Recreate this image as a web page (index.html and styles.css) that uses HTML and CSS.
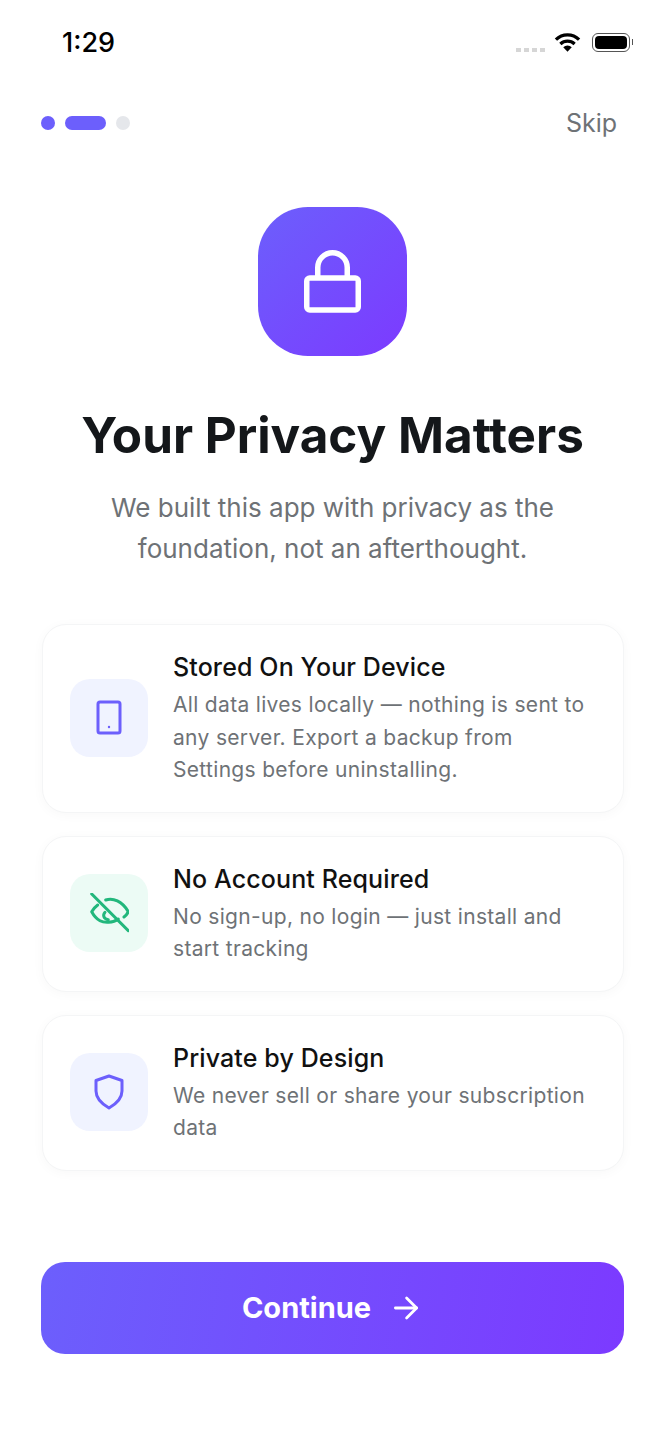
FILE: index.html
```html
<!DOCTYPE html>
<html lang="en">
<head>
    <meta charset="UTF-8">
    <meta name="viewport" content="width=device-width, initial-scale=1.0">
    <title>Your Privacy Matters</title>
    <link rel="stylesheet" href="styles.css">
</head>
<body>

<div class="status-bar">
    <span class="time">1:29</span>
    <div class="status-icons">
        <div class="signal"><i></i><i></i><i></i><i></i></div>
        <svg class="wifi" width="27" height="20" viewBox="0 0 28 20">
            <path d="M2 7.500 A17 17 0 0 1 26 7.500" fill="none" stroke="#000" stroke-width="3.400"/>
            <path d="M6.600 12 A11 11 0 0 1 21.400 12" fill="none" stroke="#000" stroke-width="3.400"/>
            <path d="M14 20 L9.600 15.400 A6.400 6.400 0 0 1 18.400 15.400 Z" fill="#000"/>
        </svg>
        <div class="battery"><div class="battery-fill"></div></div>
        <div class="battery-cap"></div>
    </div>
</div>

<div class="top-row">
    <div class="dots">
        <span class="dot"></span>
        <span class="dot wide"></span>
        <span class="dot off"></span>
    </div>
    <span class="skip">Skip</span>
</div>

<div class="hero">
    <div class="hero-icon">
        <svg width="57" height="63" viewBox="0 0 57 63" fill="none" stroke="#fff" stroke-width="5.500" stroke-linejoin="round">
            <rect x="2.750" y="28" width="51.500" height="32" rx="3"/>
            <path d="M13.750 28 V17.500 A14.750 14.750 0 0 1 43.250 17.500 V28"/>
        </svg>
    </div>
    <h1>Your Privacy Matters</h1>
    <p class="subtitle">We built this app with privacy as the<br>foundation, not an afterthought.</p>
</div>

<div class="cards">
    <div class="card">
        <div class="card-icon blue">
            <svg width="28" height="36" viewBox="0 0 28 36" fill="none" stroke="#6c5ffc" stroke-width="3">
                <rect x="3" y="2" width="22" height="31" rx="2"/>
                <circle cx="14" cy="27" r="1.200" fill="#6c5ffc" stroke="none"/>
            </svg>
        </div>
        <div class="card-text">
            <h2>Stored On Your Device</h2>
            <p>All data lives locally — nothing is sent to any server. Export a backup from Settings before uninstalling.</p>
        </div>
    </div>
    <div class="card">
        <div class="card-icon green">
            <svg width="40" height="40" viewBox="0 0 40 40" fill="none" stroke="#22b77c" stroke-width="3" stroke-linecap="round" stroke-linejoin="round">
                <path d="M2.700 1 L39.300 37.700"/>
                <path d="M8.700 12 C6 14 4 16.500 2.700 18.700 C5 23 8 26 11 27.700 C15 30 24 30 29.300 26"/>
                <path d="M16.700 7 C24 4.500 33 8 39.300 18.700 C38.500 20.500 37 22.500 35 24"/>
                <path d="M16 19.300 C13.500 22 14.500 26 19.300 26.700"/>
            </svg>
        </div>
        <div class="card-text">
            <h2>No Account Required</h2>
            <p>No sign-up, no login — just install and start tracking</p>
        </div>
    </div>
    <div class="card">
        <div class="card-icon blue">
            <svg width="30" height="36" viewBox="0 0 30 36" fill="none" stroke="#6c5ffc" stroke-width="3" stroke-linejoin="round">
                <path d="M15 2 L28 6.500 V17 C28 25 22 30 15 34 C8 30 2 25 2 17 V6.500 Z"/>
            </svg>
        </div>
        <div class="card-text">
            <h2>Private by Design</h2>
            <p>We never sell or share your subscription data</p>
        </div>
    </div>
</div>

<div class="footer">
    <button type="button" class="continue-btn">
        <span>Continue</span>
        <svg width="30" height="24" viewBox="0 0 30 24" fill="none" stroke="#fff" stroke-width="2.800" stroke-linecap="round" stroke-linejoin="round">
            <path d="M2.400 12 H23.600"/>
            <path d="M13.600 2 L23.600 12 L13.600 22"/>
        </svg>
    </button>
</div>

</body>
</html>
```

FILE: styles.css
```css
body {
    font-family: Inter, 'Noto Sans', sans-serif;
    background-color: #ffffff;
    margin: 0;
    padding: 0;
    height: 1440px;
    overflow: hidden;
}

h1, h2, p {
    margin: 0;
}

.status-bar {
    display: flex;
    justify-content: space-between;
    align-items: center;
    height: 84px;
    padding: 0 32px 0 62px;
    box-sizing: border-box;
}

.time {
    font-size: 27px;
    font-weight: 500;
    color: #000;
}

.status-icons {
    display: flex;
    align-items: center;
}

.signal {
    display: flex;
    gap: 3px;
    margin: 15px 9px 0 0;
}

.signal i {
    width: 5px;
    height: 4px;
    background-color: #d6d6d6;
}

.wifi {
    margin-right: 11px;
}

.battery {
    width: 38px;
    height: 19px;
    border: 1px solid #555;
    border-radius: 6px;
    padding: 2px;
    box-sizing: border-box;
}

.battery-fill {
    height: 100%;
    background-color: #000;
    border-radius: 4px;
}

.battery-cap {
    width: 1.5px;
    height: 6px;
    margin-left: 1.5px;
    background-color: #555;
}

.top-row {
    display: flex;
    justify-content: space-between;
    align-items: center;
    height: 78px;
    padding: 0 48px 0 41px;
}

.dots {
    display: flex;
    align-items: center;
    gap: 10px;
}

.dot {
    width: 14px;
    height: 14px;
    border-radius: 7px;
    background-color: #6c5ffc;
}

.dot.wide {
    width: 41px;
}

.dot.off {
    background-color: #e5e7eb;
}

.skip {
    font-size: 25px;
    color: #6e7276;
}

.hero {
    display: flex;
    flex-direction: column;
    align-items: center;
    padding-top: 45px;
}

.hero-icon {
    display: flex;
    justify-content: center;
    align-items: center;
    width: 149px;
    height: 149px;
    border-radius: 50px;
    background: linear-gradient(135deg, #6c5ffc, #7c3aff);
}

h1 {
    margin-top: 47px;
    font-size: 49.400px;
    line-height: 64px;
    font-weight: 700;
    color: #14171a;
}

.subtitle {
    margin-top: 20px;
    font-size: 26px;
    line-height: 41px;
    color: #6e7276;
    text-align: center;
}

.cards {
    display: flex;
    flex-direction: column;
    gap: 23px;
    margin: 55px 41px 0 42px;
}

.card {
    display: flex;
    align-items: center;
    gap: 25px;
    padding: 24px 28px 25px 27px;
    background-color: #fff;
    border: 1px solid #f4f5f6;
    border-radius: 24px;
    box-shadow: 0 2px 12px rgba(0, 0, 0, 0.03);
}

.card-icon {
    flex-shrink: 0;
    display: flex;
    justify-content: center;
    align-items: center;
    width: 78px;
    height: 78px;
    border-radius: 20px;
}

.card-icon.blue {
    background-color: #f0f3ff;
}

.card-icon.green {
    background-color: #ecfbf5;
}

.card-text h2 {
    margin-bottom: 4px;
    font-size: 25px;
    line-height: 36px;
    font-weight: 500;
    letter-spacing: 0.12px;
    color: #111;
}

.card-text p {
    font-size: 21px;
    line-height: 32.500px;
    letter-spacing: 0.32px;
    color: #6e7276;
}

.footer {
    padding: 91px 41px 0;
}

.continue-btn {
    display: flex;
    justify-content: center;
    align-items: center;
    gap: 22px;
    width: 100%;
    height: 92px;
    border: none;
    border-radius: 24px;
    background: linear-gradient(100deg, #6c5ffc, #7c3aff);
    color: #fff;
    font-family: inherit;
    font-size: 29px;
    font-weight: 700;
}
```
